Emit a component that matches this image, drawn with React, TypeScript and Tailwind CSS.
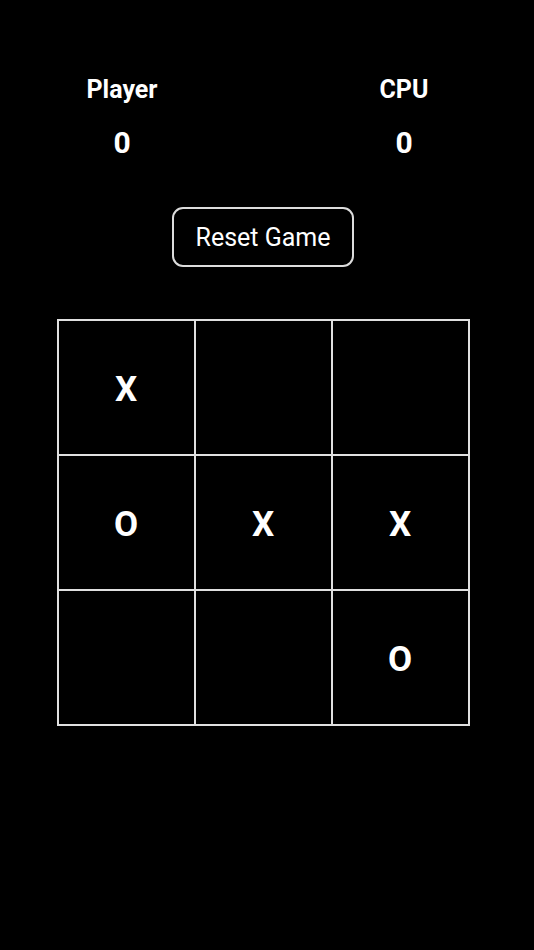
import { useState } from 'react';

type Mark = 'X' | 'O' | '';

const initialBoard: Mark[] = ['X', '', '', 'O', 'X', 'X', '', '', 'O'];

const ScoreBox = ({ label, score }: { label: string; score: number }) => (
  <div className="flex w-[130px] flex-col items-center">
    <span className="text-[25px] font-bold leading-none">{label}</span>
    <span className="mt-[26px] text-[30px] font-bold leading-none">{score}</span>
  </div>
);

export default function App() {
  const [board, setBoard] = useState<Mark[]>(initialBoard);
  const [scores, setScores] = useState({ player: 0, cpu: 0 });

  const reset = () => {
    setBoard(Array(9).fill(''));
    setScores({ player: 0, cpu: 0 });
  };

  return (
    <div
      className="flex min-h-[950px] w-full flex-col items-center bg-black pr-[8px] text-white"
      style={{ fontFamily: 'Roboto, "Noto Sans", sans-serif' }}
    >
      {/* score row */}
      <div className="mt-[77px] flex w-[412px] justify-between">
        <ScoreBox label="Player" score={scores.player} />
        <ScoreBox label="CPU" score={scores.cpu} />
      </div>

      <button
        onClick={reset}
        className="mt-[49px] h-[60px] w-[182px] rounded-[11px] border-2 border-[#dcdcdc] text-[25px] leading-none text-white"
      >
        Reset Game
      </button>

      {/* board */}
      <div className="mt-[52px] grid grid-cols-3 border border-[#e0e0e0]">
        {board.map((cell, i) => (
          <div
            key={i}
            className="flex h-[135px] w-[137px] items-center justify-center border border-[#e0e0e0] pt-[6px] text-[35px] font-bold"
          >
            {cell}
          </div>
        ))}
      </div>
    </div>
  );
}
